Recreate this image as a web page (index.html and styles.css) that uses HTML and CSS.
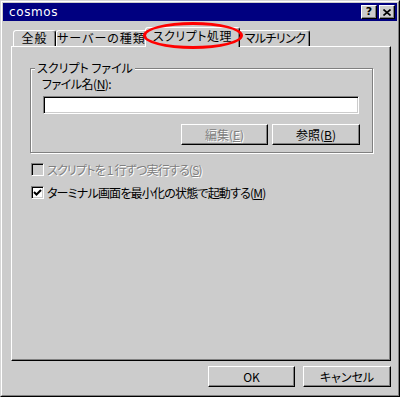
FILE: index.html
```html
<!DOCTYPE html>
<html lang="ja">
<head>
<meta charset="utf-8">
<title>cosmos</title>
<link rel="stylesheet" href="styles.css">
</head>
<body>
<div class="window">
  <div class="frame">
    <div class="titlebar">
      <span class="title">cosmos</span>
      <div class="tbtns">
        <div class="tbtn q">?</div>
        <div class="tbtn">
          <svg width="8" height="7" viewBox="0 0 8 7"><path d="M0.5 0.5 L7.5 6.5 M7.5 0.5 L0.5 6.5" stroke="#000" stroke-width="1.6" fill="none"/></svg>
        </div>
      </div>
    </div>
    <div class="body">
      <div class="tabs">
        <div class="tab t1">全般</div>
        <div class="tab t2">サーバーの種類</div>
        <div class="tab active">スクリプト処理</div>
        <div class="tab t4">マルチリンク</div>
      </div>
      <div class="panel">
        <div class="group">
          <span class="legend">スクリプト ファイル</span>
          <div class="lbl">ファイル名(<u>N</u>):</div>
          <div class="field"></div>
          <div class="grow">
            <div class="btn disabled b1">編集(<u>E</u>)</div>
            <div class="btn b2">参照(<u>B</u>)</div>
          </div>
        </div>
        <div class="checks">
          <div class="crow disabled">
            <span class="cbox off"></span>
            <span class="ctext">スクリプトを&nbsp;1&nbsp;行ずつ実行する(<u>S</u>)</span>
          </div>
          <div class="crow">
            <span class="cbox">
              <svg width="9" height="9" viewBox="0 0 9 9"><path d="M1 4 L3.5 6.5 L8 2" stroke="#000" stroke-width="2" fill="none"/></svg>
            </span>
            <span class="ctext">ターミナル画面を最小化の状態で起動する(<u>M</u>)</span>
          </div>
        </div>
      </div>
      <div class="footer">
        <div class="btn ok">OK</div>
        <div class="btn cancel">キャンセル</div>
      </div>
    </div>
  </div>
  <div class="mark"></div>
</div>
</body>
</html>
```

FILE: styles.css
```css
html, body {
  margin: 0;
  padding: 0;
  background: #cccccc;
}
body {
  width: 400px;
  height: 397px;
  overflow: hidden;
  font-family: "Noto Sans CJK JP", "DejaVu Sans", sans-serif;
  font-size: 12px;
  color: #000;
  font-feature-settings: "palt";
}
.window {
  position: relative;
  box-sizing: border-box;
  width: 400px;
  height: 397px;
  border: 1px solid;
  border-color: #d6d6d6 #000 #000 #d6d6d6;
  background: #cccccc;
}
.frame {
  box-sizing: border-box;
  height: 100%;
  border: 1px solid;
  border-color: #fff #808080 #808080 #fff;
  padding: 1px;
}
.titlebar {
  height: 18px;
  background: #000080;
  color: #fff;
  display: flex;
  align-items: center;
  justify-content: space-between;
  padding-left: 6px;
}
.title {
  font-family: "DejaVu Sans", sans-serif;
  font-size: 12px;
  letter-spacing: 0.6px;
  line-height: 14px;
}
.tbtns {
  display: flex;
  gap: 2px;
  margin-right: 2px;
}
.tbtn {
  box-sizing: border-box;
  width: 16px;
  height: 14px;
  background: #cccccc;
  border: 1px solid;
  border-color: #fff #000 #000 #fff;
  box-shadow: inset -1px -1px #808080;
  display: flex;
  align-items: center;
  justify-content: center;
  color: #000;
}
.tbtn.q {
  font-family: "DejaVu Sans", sans-serif;
  font-weight: bold;
  font-size: 11px;
  line-height: 12px;
}
.body {
  padding: 6px 6px 0 8px;
}
.tabs {
  display: flex;
  align-items: flex-end;
  height: 19px;
  padding-left: 2px;
  position: relative;
  z-index: 1;
}
.tab {
  box-sizing: border-box;
  height: 16px;
  border: 1px solid;
  border-bottom: none;
  border-color: #fff #000 transparent #fff;
  box-shadow: inset -1px 0 #808080;
  border-radius: 3px 3px 0 0;
  background: #cccccc;
  text-align: center;
  line-height: 14px;
  white-space: nowrap;
  letter-spacing: 1px;
}
.t1 { width: 43px; }
.t2 { width: 91px; }
.t4 { width: 72px; letter-spacing: -0.6px; padding-left: 2px; }
.tab.active {
  width: 95px;
  height: 20px;
  margin: 0 -2px -1px;
  line-height: 15px;
  position: relative;
  z-index: 2;
  letter-spacing: 0.5px;
}
.panel {
  box-sizing: border-box;
  width: 380px;
  height: 315px;
  border: 1px solid;
  border-color: #fff #000 #000 #fff;
  box-shadow: inset -1px -1px #808080;
  padding-top: 21px;
}
.group {
  position: relative;
  box-sizing: border-box;
  width: 343px;
  height: 85px;
  margin-left: 18px;
  border: 1px solid #808080;
  box-shadow: inset 1px 1px #fff, 1px 1px #fff;
  padding: 8px 12px 0 11px;
}
.legend {
  position: absolute;
  top: -8px;
  left: 4px;
  padding: 0 2px;
  background: #cccccc;
  line-height: 14px;
}
.lbl {
  line-height: 14px;
  letter-spacing: -0.5px;
}
.field {
  box-sizing: border-box;
  height: 18px;
  margin: 5px 1px 0;
  background: #fff;
  border: 1px solid;
  border-color: #808080 #fff #fff #808080;
  box-shadow: inset 1px 1px #000, inset -1px -1px #cccccc;
}
.grow {
  display: flex;
  justify-content: flex-end;
  gap: 4px;
  margin-top: 10px;
}
.btn {
  box-sizing: border-box;
  height: 21px;
  border: 1px solid;
  border-color: #fff #000 #000 #fff;
  box-shadow: inset -1px -1px #808080;
  display: flex;
  align-items: center;
  justify-content: center;
  line-height: 14px;
}
.b1 { width: 87px; }
.b2 { width: 88px; }
.disabled {
  color: #808080;
  text-shadow: 1px 1px 0 #fff;
}
.checks {
  display: flex;
  flex-direction: column;
  gap: 10px;
  margin: 10px 0 0 19px;
}
.crow {
  display: flex;
  align-items: center;
  gap: 3px;
  height: 13px;
}
.cbox {
  box-sizing: border-box;
  width: 13px;
  height: 13px;
  background: #fff;
  border: 1px solid;
  border-color: #808080 #fff #fff #808080;
  box-shadow: inset 1px 1px #000, inset -1px -1px #cccccc;
  display: flex;
  align-items: center;
  justify-content: center;
}
.cbox.off {
  background: #cccccc;
}
.ctext {
  line-height: 13px;
  white-space: nowrap;
  letter-spacing: -0.8px;
}
.footer {
  display: flex;
  justify-content: flex-end;
  gap: 8px;
  margin-top: 5px;
}
.ok { width: 87px; }
.cancel { width: 88px; }
.mark {
  position: absolute;
  z-index: 5;
  left: 142px;
  top: 21px;
  width: 94px;
  height: 21px;
  border: 3px solid #ff0000;
  border-radius: 50%;
  pointer-events: none;
}
```
